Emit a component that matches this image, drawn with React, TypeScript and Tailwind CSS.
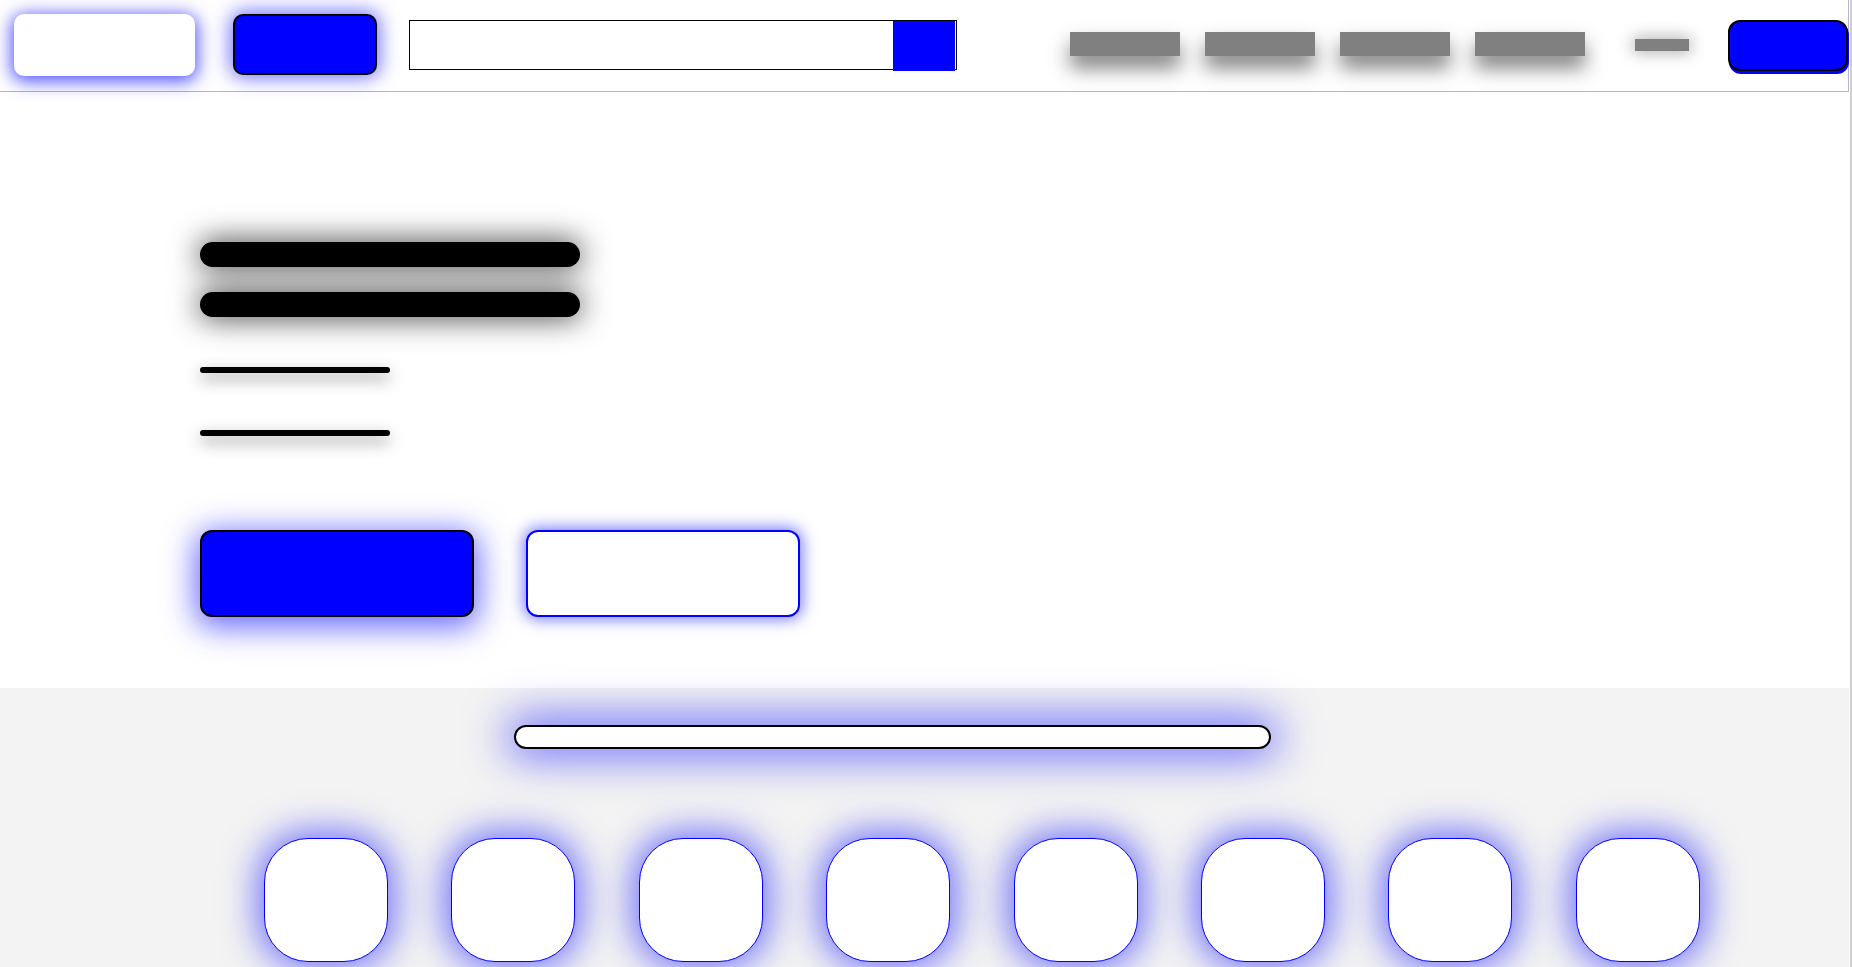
import React from 'react'

export default function App() {
  const navItems = ['a', 'b', 'c', 'd']
  const tiles = [1, 2, 3, 4, 5, 6, 7, 8]

  return (
    <div className="w-full min-h-screen bg-white border-r-2 border-[#cfcfcf] font-['Liberation_Sans',sans-serif]">
      <div className="w-[1849px]">
        {/* Header */}
        <header className="h-[92px] flex items-start border-b border-r border-[#b4b4d4] bg-white">
          <div className="ml-[14px] mt-[14px] w-[181px] h-[62px] bg-white rounded-[10px] shadow-[0_3px_18px_2px_rgba(0,0,255,0.7)]" />
          <button className="ml-[38px] mt-[14px] w-[144px] h-[61px] bg-[#0000ff] border-2 border-black rounded-[10px] shadow-[0_0_20px_2px_rgba(0,0,255,0.6)]" />
          <div className="ml-[32px] mt-[20px] w-[549px] h-[50px] border border-black flex items-start justify-end bg-white">
            <button className="w-[62px] h-[50px] mr-[1px] bg-[#0000ff] shrink-0" />
          </div>

          {/* Nav links */}
          <nav className="ml-[113px] mt-[32px] flex gap-[25px]">
            {navItems.map((n) => (
              <div key={n} className="w-[110px] h-[24px] bg-[#808080] shadow-[0_12px_20px_rgba(0,0,0,0.5)]" />
            ))}
          </nav>
          <div className="ml-[50px] mt-[39px] w-[54px] h-[12px] bg-[#808080] shadow-[0_0_16px_2px_rgba(0,0,0,0.3)]" />
          <button className="ml-[39px] mt-[20px] w-[120px] h-[51px] bg-[#0000ff] border-2 border-black rounded-[12px] shadow-[1px_3px_0_#0000ff]" />
        </header>

        {/* Hero */}
        <section className="h-[596px] bg-white pl-[200px] pt-[150px] flex flex-col">
          <div className="w-[380px] h-[25px] rounded-full bg-black shadow-[0_0_30px_2px_rgba(0,0,0,0.7)]" />
          <div className="mt-[25px] w-[380px] h-[25px] rounded-full bg-black shadow-[0_0_30px_2px_rgba(0,0,0,0.7)]" />
          <div className="mt-[50px] w-[190px] h-[6px] rounded-full bg-black shadow-[0_6px_16px_rgba(0,0,0,0.45)]" />
          <div className="mt-[57px] w-[190px] h-[6px] rounded-full bg-black shadow-[0_6px_16px_rgba(0,0,0,0.45)]" />
          <div className="mt-[94px] flex gap-[52px]">
            <button className="w-[274px] h-[87px] bg-[#0000ff] border-2 border-black rounded-[12px] shadow-[0_6px_32px_4px_rgba(0,0,255,0.6)]" />
            <button className="w-[274px] h-[87px] bg-white border-2 border-[#0000ff] rounded-[12px] shadow-[0_0_16px_2px_rgba(0,0,255,0.55)]" />
          </div>
        </section>

        {/* Categories */}
        <section className="bg-[#f3f3f3] pt-[37px] pb-[40px]">
          <div className="ml-[514px] w-[757px] h-[24px] bg-white border-2 border-black rounded-full shadow-[0_0_44px_8px_rgba(0,0,255,0.55)]" />
          <div className="mt-[89px] ml-[264px] flex gap-[63.4px]">
            {tiles.map((t) => (
              <div key={t} className="w-[124px] h-[124px] bg-white border border-[#0000ff] rounded-[44px] shadow-[0_0_36px_6px_rgba(0,0,255,0.55)]" />
            ))}
          </div>
        </section>
      </div>
    </div>
  )
}
